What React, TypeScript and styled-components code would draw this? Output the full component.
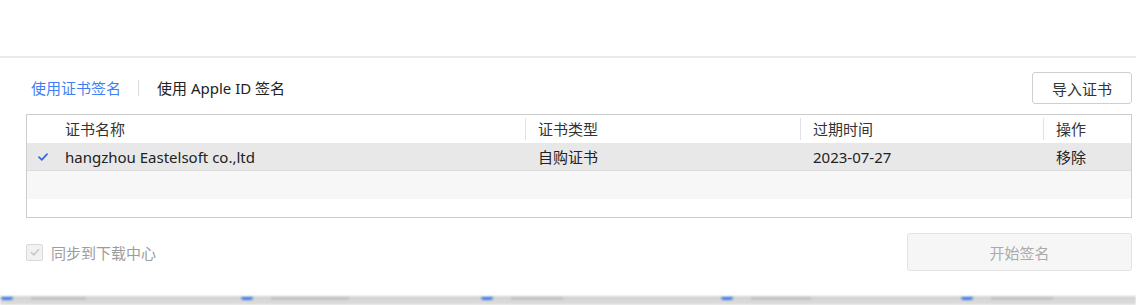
import React from "react";
import styled, { createGlobalStyle } from "styled-components";

const GlobalStyle = createGlobalStyle`
  html, body {
    margin: 0;
    padding: 0;
    background: #fff;
  }
  body {
    font-family: "Noto Sans", "Noto Sans CJK SC", sans-serif;
    color: #333;
  }
`;

const columns = ["证书名称", "证书类型", "过期时间", "操作"];

const rows = [
  {
    name: "hangzhou Eastelsoft co.,ltd",
    type: "自购证书",
    expire: "2023-07-27",
    action: "移除",
    selected: true,
  },
];

const App = () => {
  return (
    <>
      <GlobalStyle />
      <Page>
        <TopSpace />
        <Body>
          <Toolbar>
            <Tabs>
              <Tab $active>使用证书签名</Tab>
              <TabDivider />
              <Tab>使用 Apple ID 签名</Tab>
            </Tabs>
            <Button>导入证书</Button>
          </Toolbar>
          <Table>
            <HeadRow>
              <Cell />
              {columns.map((c, i) => (
                <HeadCell key={c} $divider={i > 0}>
                  {c}
                </HeadCell>
              ))}
            </HeadRow>
            {rows.map((r) => (
              <Row key={r.name} $tone="selected">
                <CheckCell>
                  {r.selected && (
                    <svg width="10" height="8" viewBox="0 0 10 8">
                      <path
                        d="M1 4.2 L3.8 6.8 L9 1.2"
                        fill="none"
                        stroke="#2f6fe8"
                        strokeWidth="1.8"
                        strokeLinecap="round"
                        strokeLinejoin="round"
                      />
                    </svg>
                  )}
                </CheckCell>
                <Cell>{r.name}</Cell>
                <Cell $pad>{r.type}</Cell>
                <Cell $pad>{r.expire}</Cell>
                <Cell $pad>{r.action}</Cell>
              </Row>
            ))}
            <Row $tone="stripe" />
          </Table>
          <Footer>
            <SyncOption>
              <CheckBox>
                <svg width="10" height="8" viewBox="0 0 10 8">
                  <path
                    d="M1 4.2 L3.8 6.8 L9 1.2"
                    fill="none"
                    stroke="#c8c8c8"
                    strokeWidth="1.6"
                  />
                </svg>
              </CheckBox>
              同步到下载中心
            </SyncOption>
            <StartButton disabled>开始签名</StartButton>
          </Footer>
        </Body>
        <Backdrop>
          {[0, 1, 2, 3, 4].map((i) => (
            <BackdropItem key={i}>
              <BlueDot />
              <GreyText $w={[55, 78, 52, 60, 62][i]} />
            </BackdropItem>
          ))}
        </Backdrop>
      </Page>
    </>
  );
};

export default App;

const Page = styled.div`
  width: 1136px;
  height: 305px;
  display: flex;
  flex-direction: column;
  overflow: hidden;
`;

const TopSpace = styled.div`
  height: 56px;
  border-bottom: 2px solid #e9e9e9;
  flex-shrink: 0;
`;

const Body = styled.div`
  flex: 1;
  display: flex;
  flex-direction: column;
  padding: 14px 4px 0 26px;
`;

const Toolbar = styled.div`
  display: flex;
  align-items: center;
  justify-content: space-between;
  height: 32px;
  margin-bottom: 10px;
`;

const Tabs = styled.div`
  display: flex;
  align-items: center;
  padding-left: 5px;
`;

const Tab = styled.div<{ $active?: boolean }>`
  font-size: 15px;
  line-height: 20px;
  color: ${(p) => (p.$active ? "#3f7ff6" : "#222")};
  cursor: pointer;
`;

const TabDivider = styled.div`
  width: 1px;
  height: 16px;
  background: #dcdcdc;
  margin: 0 18px 0 17px;
`;

const Button = styled.button`
  width: 100px;
  height: 32px;
  border: 1px solid #cfcfcf;
  border-radius: 3px;
  background: #fff;
  font-family: inherit;
  font-size: 15px;
  color: #333;
  padding: 0;
`;

const Table = styled.div`
  height: 104px;
  border: 1px solid #cdcdcd;
  box-sizing: border-box;
  display: flex;
  flex-direction: column;
`;

const grid = `
  display: grid;
  grid-template-columns: 38px 460px 275px 243px 1fr;
  align-items: center;
`;

const HeadRow = styled.div`
  ${grid};
  height: 28px;
`;

const Row = styled.div<{ $tone: "selected" | "stripe" }>`
  ${grid};
  height: 28px;
  background: ${(p) => (p.$tone === "selected" ? "#e8e8e8" : "#f7f7f7")};
  border-bottom: ${(p) => (p.$tone === "selected" ? "1px solid #dadada" : "none")};
  box-sizing: border-box;
`;

const Cell = styled.div<{ $pad?: boolean }>`
  font-size: 15px;
  line-height: 20px;
  color: #222;
  padding-left: ${(p) => (p.$pad ? "13px" : "0")};
  white-space: nowrap;
`;

const CheckCell = styled.div`
  display: flex;
  justify-content: flex-end;
  padding-right: 17px;
`;

const HeadCell = styled.div<{ $divider?: boolean }>`
  font-size: 15px;
  line-height: 20px;
  color: #333;
  padding-left: ${(p) => (p.$divider ? "12px" : "0")};
  border-left: ${(p) => (p.$divider ? "1px solid #e2e2e2" : "none")};
  height: 22px;
  display: flex;
  align-items: center;
`;

const Footer = styled.div`
  display: flex;
  align-items: center;
  justify-content: space-between;
  margin-top: 15px;
`;

const SyncOption = styled.label`
  display: flex;
  align-items: center;
  gap: 8px;
  font-size: 15px;
  color: #9c9c9c;
`;

const CheckBox = styled.span`
  width: 15px;
  height: 15px;
  border: 1px solid #d8d8d8;
  border-radius: 2px;
  background: #f2f2f2;
  display: flex;
  align-items: center;
  justify-content: center;
`;

const StartButton = styled.button`
  width: 225px;
  height: 38px;
  border: 1px solid #e2e2e2;
  border-radius: 3px;
  background: #f6f6f6;
  font-family: inherit;
  font-size: 15px;
  color: #aaa;
  padding: 0;
`;

const Backdrop = styled.div`
  height: 9px;
  flex-shrink: 0;
  background: linear-gradient(#d2d2d2, #dedede);
  display: flex;
  align-items: flex-start;
  padding-left: 1px;
  gap: 180px;
  filter: blur(0.8px);
`;

const BackdropItem = styled.div`
  display: flex;
  align-items: flex-start;
  gap: 18px;
  width: 60px;
  flex-shrink: 0;
`;

const BlueDot = styled.span`
  width: 12px;
  height: 3px;
  margin-top: 1px;
  border-radius: 0 0 6px 6px;
  background: #3d7ae6;
  flex-shrink: 0;
`;

const GreyText = styled.span<{ $w: number }>`
  width: ${(p) => p.$w}px;
  height: 3px;
  margin-top: 1px;
  background: #b2b2b2;
  opacity: 0.5;
  flex-shrink: 0;
`;
